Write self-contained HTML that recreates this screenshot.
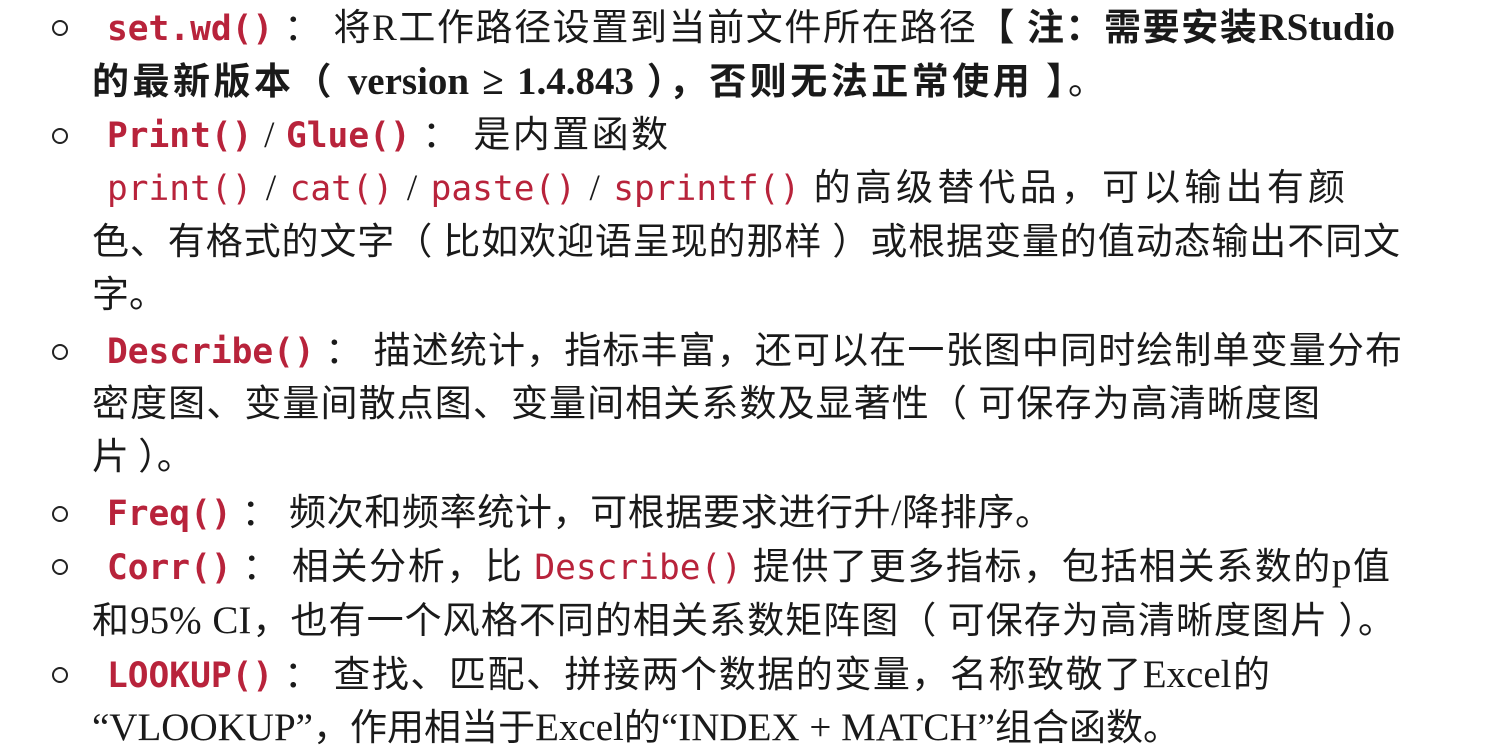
<!DOCTYPE html>
<html><head><meta charset="utf-8"><style>
html,body{margin:0;padding:0;background:#fff;width:1486px;height:748px;overflow:hidden}
body{font-family:"Liberation Serif","Noto Sans CJK SC",serif;font-size:37px;color:#1a1a1a}
.l{position:absolute;left:92px;height:54px;line-height:54px;white-space:nowrap;text-align:justify;text-align-last:justify;text-justify:inter-character}
.s{left:107px}
.n{text-align-last:left}
.b{position:absolute;left:52px;width:12px;height:12px;border:2.5px solid #222;border-radius:50%}
code{font-family:"DejaVu Sans Mono","Liberation Mono",monospace;font-size:34.5px;color:#b8233b}
code.k{font-weight:bold}
b{font-weight:bold}
.v{font-size:39px}
</style></head><body>
<div class="b" style="top:20px"></div>
<div class="l s" style="top:1px;width:1288px"><code class="k">set.wd()</code> ： 将R工作路径设置到当前文件所在路径<b>【 注：需要安装<span class="v">RStudio</span></b></div>
<div class="l" style="top:55px;width:1013px"><b>的最新版本（ <span class="v">version ≥ 1.4.843</span> ），否则无法正常使用 】</b>。</div>
<div class="b" style="top:128px"></div>
<div class="l s" style="top:109px;width:561px"><code class="k">Print()</code> / <code class="k">Glue()</code> ： 是内置函数</div>
<div class="l s" style="top:162px;width:1238px"><code>print()</code> / <code>cat()</code> / <code>paste()</code> / <code>sprintf()</code> 的高级替代品，可以输出有颜</div>
<div class="l" style="top:216px;width:1308px">色、有格式的文字（ 比如欢迎语呈现的那样 ）或根据变量的值动态输出不同文</div>
<div class="l n" style="top:269px">字。</div>
<div class="b" style="top:344px"></div>
<div class="l s" style="top:325px;width:1295px"><code class="k">Describe()</code> ： 描述统计，指标丰富，还可以在一张图中同时绘制单变量分布</div>
<div class="l" style="top:378px;width:1228px">密度图、变量间散点图、变量间相关系数及显著性（ 可保存为高清晰度图</div>
<div class="l n" style="top:431px">片 ）。</div>
<div class="b" style="top:506px"></div>
<div class="l s" style="top:487px;width:945px"><code class="k">Freq()</code> ： 频次和频率统计，可根据要求进行升/降排序。</div>
<div class="b" style="top:559px"></div>
<div class="l s" style="top:540px;width:1283px"><code class="k">Corr()</code> ： 相关分析，比 <code>Describe()</code> 提供了更多指标，包括相关系数的<span class="v">p</span>值</div>
<div class="l" style="top:594px;width:1303px">和<span class="v">95% CI</span>，也有一个风格不同的相关系数矩阵图（ 可保存为高清晰度图片 ）。</div>
<div class="b" style="top:667px"></div>
<div class="l s" style="top:648px;width:1163px"><code class="k">LOOKUP()</code> ： 查找、匹配、拼接两个数据的变量，名称致敬了<span class="v">Excel</span>的</div>
<div class="l" style="top:701px;width:1088px"><span class="v">“VLOOKUP”</span>，作用相当于<span class="v">Excel</span>的<span class="v">“INDEX + MATCH”</span>组合函数。</div>
</body></html>
